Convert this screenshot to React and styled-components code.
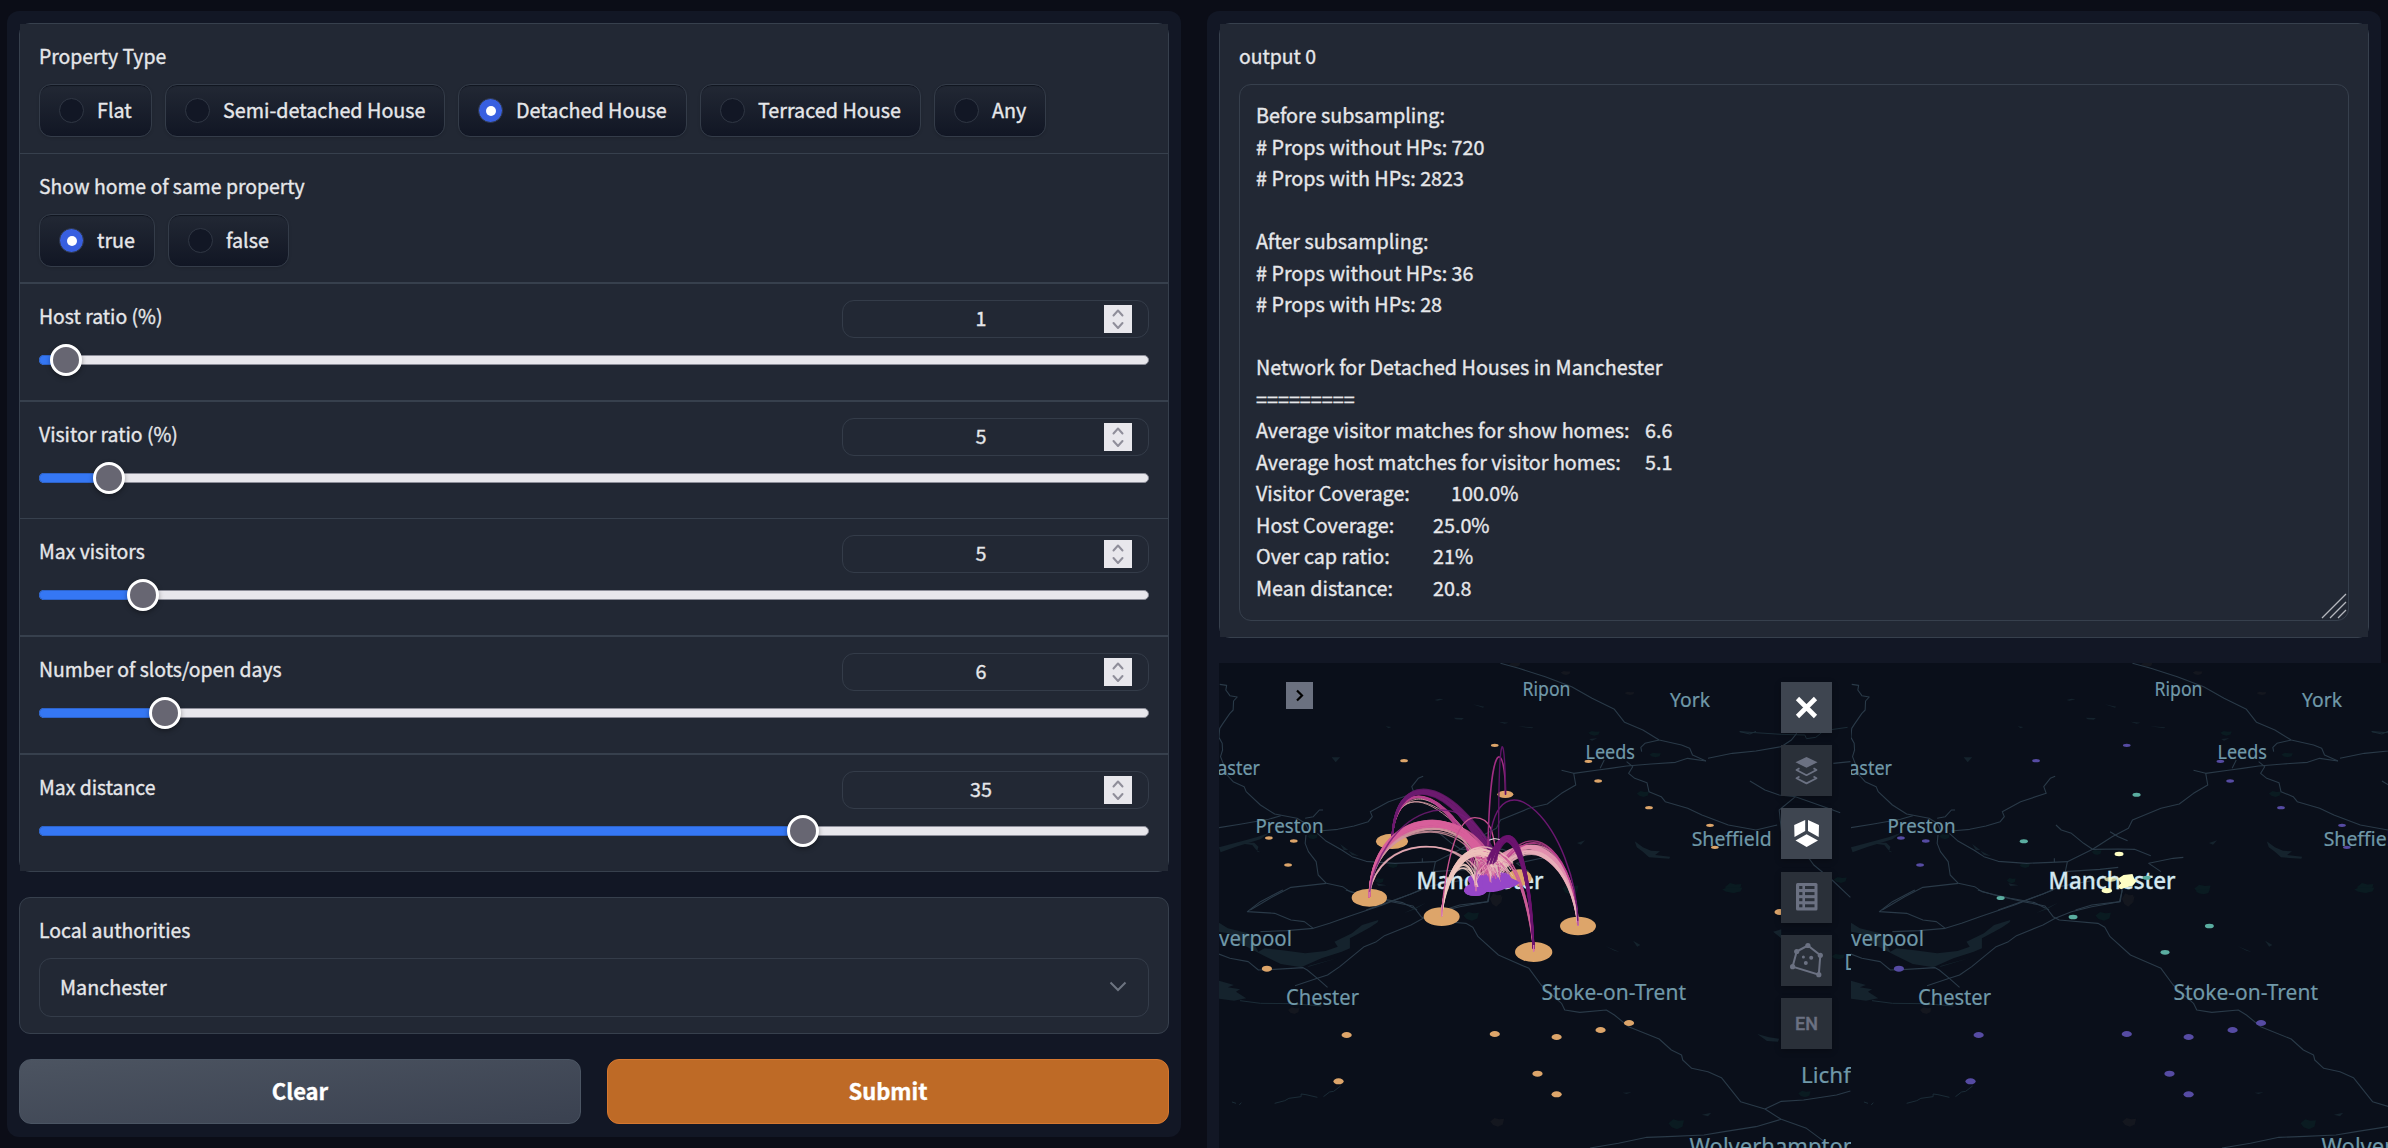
import React from "react";
import styled, { createGlobalStyle, css } from "styled-components";

const GlobalStyle = createGlobalStyle`
  *, *::before, *::after { box-sizing: border-box; }
  body {
    margin: 0;
    background: #0b0d17;
    color: #e6e7ea;
    font-family: "Noto Sans CJK SC", "Open Sans", sans-serif;
    font-size: 19.75px;
    -webkit-text-stroke: 0.35px currentColor;
    overflow: hidden;
  }
`;

const Page = styled.main`
  display: flex;
  align-items: flex-start;
  gap: 26px;
  width: 2388px;
  height: 1148px;
  padding: 11px 7px 0;
  overflow: hidden;
`;

const Panel = styled.section`
  display: flex;
  flex-direction: column;
  flex: 0 0 1174px;
  min-width: 0;
  width: 1174px;
  height: ${(p) => p.$height}px;
  padding: 12px;
  border-radius: 12px;
  background: #121725;
`;

const Group = styled.div`
  border: 1px solid #37404d;
  border-radius: 11px;
`;

const Row = styled.div`
  height: ${(p) => p.$height}px;
  padding: 17px 19px 0;
  background: #222834;
  border-bottom: ${(p) => p.$rule || 0}px solid #37404d;
`;

const Label = styled.div`
  font-size: 19.4px;
  line-height: 30px;
  white-space: nowrap;
`;

const Options = styled.div`
  display: flex;
  gap: 13px;
  margin-top: 13px;
`;

const Option = styled.label`
  display: flex;
  align-items: center;
  gap: 13px;
  width: ${(p) => p.$width}px;
  height: 53px;
  padding-left: 19px;
  border: 1px solid #343c49;
  border-radius: 12px;
  background: linear-gradient(#222834, #111624);
  box-shadow: inset 0 2px 1px -1px #10141f, 0 1px 3px rgba(0, 0, 0, 0.12);
  white-space: nowrap;
`;

const OptionText = styled.span`
  line-height: 26px;
  margin-bottom: 2px;
`;

const Dot = styled.span`
  display: flex;
  align-items: center;
  justify-content: center;
  width: 25px;
  height: 25px;
  border: 1px solid #303744;
  border-radius: 50%;
  background: ${(p) => (p.$on ? "#385fe0" : "#121725")};

  &::after {
    content: "";
    width: 10px;
    height: 10px;
    border-radius: 50%;
    background: ${(p) => (p.$on ? "#fff" : "transparent")};
  }
`;

const SliderHead = styled.div`
  display: flex;
  justify-content: space-between;
`;

const NumberBox = styled.div`
  display: flex;
  align-items: center;
  width: 307px;
  height: 38px;
  margin-top: -1px;
  padding: 0 16px 0 15px;
  border: 1px solid #343c49;
  border-radius: 12px;
`;

const NumberValue = styled.span`
  flex: 1;
  padding-bottom: 2px;
  line-height: 28px;
  text-align: center;
`;

const Stepper = styled.span`
  display: flex;
  width: 28px;
  height: 28px;
  background: #e8e7ec;
`;

const Track = styled.div`
  display: flex;
  align-items: center;
  height: 10px;
  margin-top: 17px;
  border: 1px solid #8d8e99;
  border-radius: 5px;
  background: #e8e7ec;
`;

const Fill = styled.div`
  flex: none;
  height: 10px;
  margin-left: -1px;
  border-radius: 5px 0 0 5px;
  background: #3577f4;
  box-shadow: inset 0 0 0 1px #2d63c9;
`;

const Thumb = styled.div`
  flex: none;
  width: 32px;
  height: 32px;
  margin-left: -16px;
  border: 3px solid #fff;
  border-radius: 50%;
  background: #676672;
  box-shadow: 0 2px 5px rgba(0, 0, 0, 0.35);
`;

const Card = styled.div`
  height: 137px;
  margin-top: 25px;
  padding: 17px 19px 0;
  border: 1px solid #37404d;
  border-radius: 11px;
  background: #222834;
`;

const Select = styled.div`
  display: flex;
  align-items: center;
  justify-content: space-between;
  height: 59px;
  margin-top: 13px;
  padding: 0 21px 3px 20px;
  border: 1px solid #343c49;
  border-radius: 12px;
`;

const Buttons = styled.div`
  display: flex;
  gap: 26px;
  margin-top: 25px;
`;

const Button = styled.button`
  flex: 1;
  height: 65px;
  padding: 0 0 3px;
  border: 1px solid ${(p) => (p.$primary ? "#d5772f" : "#4b5563")};
  border-radius: 12px;
  background: ${(p) => (p.$primary ? "#be6a26" : "linear-gradient(to bottom right, #4c5461, #3a4150)")};
  color: #fff;
  font: 700 22px "Noto Sans CJK SC", "Open Sans", sans-serif;
`;

const TextArea = styled.div`
  display: flex;
  justify-content: space-between;
  align-items: flex-end;
  height: 537px;
  margin-top: 13px;
  padding: 14px 1px 1px 16px;
  border: 1px solid #37404d;
  border-radius: 12px;
`;

const Lines = styled.div`
  align-self: flex-start;
`;

const Line = styled.div`
  display: grid;
  grid-template-columns: ${(p) => (p.$column ? `${p.$column}px auto` : "auto")};
  height: 31.5px;
  line-height: 31.5px;
  white-space: nowrap;
`;

const Maps = styled.div`
  display: flex;
  width: 1264px;
  margin-top: 25px;
`;

const MapPane = styled.div`
  position: relative;
  flex: 0 0 632px;
  height: 485px;
  overflow: hidden;
  background: #0a0f1a;
`;

const MapSvg = styled.svg`
  display: block;
  width: 632px;
  height: 485px;
  -webkit-text-stroke: 0;

  text { font-family: "Noto Sans", "Open Sans", sans-serif; }
  path { vector-effect: non-scaling-stroke; }
`;

const ExpandButton = styled.div`
  position: absolute;
  left: 67px;
  top: 19px;
  width: 27px;
  height: 27px;
  background: #6b7180;
`;

const Toolbar = styled.div`
  position: absolute;
  right: 19px;
  top: 19px;
  display: flex;
  flex-direction: column;
  gap: 12.2px;
`;

const Tool = styled.div`
  display: flex;
  align-items: center;
  justify-content: center;
  width: 51px;
  height: 51px;
  background: ${(p) => (p.$active ? "#3e4550" : "#2a3039")};
  color: #6b7182;
  font: 500 18px Roboto, "Open Sans", sans-serif;
  box-shadow: 0 2px 6px rgba(0, 0, 0, 0.25);
  ${(p) => p.$active && css`color: #fff;`}
`;

const PROPERTY_TYPES = [
  { text: "Flat", width: 113 },
  { text: "Semi-detached House", width: 280 },
  { text: "Detached House", width: 229, on: true },
  { text: "Terraced House", width: 221 },
  { text: "Any", width: 112 },
];

const SAME_PROPERTY = [
  { text: "true", width: 116, on: true },
  { text: "false", width: 121 },
];

const SLIDERS = [
  { label: "Host ratio (%)", value: 1, at: 26.5, height: 118, rule: 2 },
  { label: "Visitor ratio (%)", value: 5, at: 69.5, height: 117, rule: 1 },
  { label: "Max visitors", value: 5, at: 104, height: 118, rule: 2 },
  { label: "Number of slots/open days", value: 6, at: 126, height: 118, rule: 2 },
  { label: "Max distance", value: 35, at: 764, height: 116, rule: 0 },
];

const OUTPUT = [
  ["Before subsampling:"],
  ["# Props without HPs: 720"],
  ["# Props with HPs: 2823"],
  [""],
  ["After subsampling:"],
  ["# Props without HPs: 36"],
  ["# Props with HPs: 28"],
  [""],
  ["Network for Detached Houses in Manchester"],
  ["========="],
  ["Average visitor matches for show homes:", 389, "6.6"],
  ["Average host matches for visitor homes:", 389, "5.1"],
  ["Visitor Coverage:", 195, "100.0%"],
  ["Host Coverage:", 177, "25.0%"],
  ["Over cap ratio:", 177, "21%"],
  ["Mean distance:", 177, "20.8"],
];

function RadioRow({ label, options, height, rule }) {
  return (
    <Row $height={height} $rule={rule}>
      <Label>{label}</Label>
      <Options>
        {options.map((o) => (
          <Option key={o.text} $width={o.width}>
            <Dot $on={o.on} />
            <OptionText>{o.text}</OptionText>
          </Option>
        ))}
      </Options>
    </Row>
  );
}

function SliderRow({ label, value, at, height, rule }) {
  return (
    <Row $height={height} $rule={rule}>
      <SliderHead>
        <Label>{label}</Label>
        <NumberBox>
          <NumberValue>{value}</NumberValue>
          <Stepper>
            <svg width="28" height="28" fill="none" stroke="#8f8e9a" strokeWidth="2" strokeLinecap="round" strokeLinejoin="round">
              <path d="M9.5 10.5 14 5.5l4.500 5M9.500 18 14 23l4.500-5" />
            </svg>
          </Stepper>
        </NumberBox>
      </SliderHead>
      <Track>
        <Fill style={{ width: at }} />
        <Thumb />
      </Track>
    </Row>
  );
}

/* Map geometry is kept in two tiles, each with its own scale. */
const NORTH = "translate(-101 -13) scale(.40689 .33333)";
const SOUTH = "translate(-101 227) scale(.40689 .33333)";

const NORTH_ROADS = [
  "M250,103 267,106 265,120 275,137 293,141 284,153 283,180 275,190 258,220 250,235 248,262 256,280 257,300 252,320 260,345 268,375 283,395 310,410 315,425 350,465 385,492 440,505 460,520 470,545",
  "M495,543 540,538 580,528 615,515 625,500 620,485 665,455 728,430 722,410 738,385 750,379",
  "M462,555 460,580 468,605 487,635 492,675 512,700 552,710 570,725 640,745 700,758 735,780",
  "M490,550 510,572 550,600 575,620 610,634 680,640 740,637 780,635 842,598 890,560 930,535 940,510 1010,475 1055,462 1090,430 1125,405 1120,370 1090,361",
  "M1120,370 1180,360 1210,355 1250,348 1310,342 1370,337 1400,325 1445,333",
  "M1450,325 1510,310 1568,303 1630,290 1655,270 1668,250",
  "M940,40 985,55 1050,80 1115,110 1165,145 1220,178 1245,217 1290,240 1330,270 1385,285 1405,295 1412,315 1445,333",
  "M1330,270 1295,280 1285,292 1287,305",
  "M1195,330 1185,355M1250,335 1265,350 1255,370 1270,385 1300,398 1305,425 1335,440 1345,455 1400,475 1435,495 1500,525 1568,540 1620,525",
  "M752,525 765,540 790,550 820,580 842,598 905,597 945,598 985,617",
  "M885,545 905,560 928,572M1065,622 1040,625 980,640 1010,665M748,625 748,637",
  "M780,635 775,665 860,658 905,652M512,700 425,712 380,740 325,780",
  "M610,780 672,753 720,732 760,710 850,690M915,715 910,755 840,765 800,780",
  "M248,533 300,523 370,508 400,497M460,505 480,500 495,480 504,480",
  "M1553,393 1590,420 1625,435 1665,440 1745,475 1775,488M1665,440 1625,480 1632,560 1700,628 1710,645 1755,690 1800,742",
  "M1758,340 1800,335",
];

const SOUTH_ROADS = [
  "M405,0 350,35 318,65 385,70 425,90 458,95 480,115 415,122 350,125",
  "M480,115 520,100 570,78 650,45 745,0",
  "M560,0 600,15 672,35 725,48 745,80 760,90 855,100 872,112 885,140 935,195 1010,235 1040,285 1090,340 1098,360 1135,367 1200,360 1220,375 1255,410 1330,447 1360,480 1385,495 1388,510 1410,535 1450,545 1483,563 1530,635 1590,657 1630,688 1692,715 1736,755",
  "M915,0 908,35 840,50 790,65 750,85 720,105 655,137 635,155 605,170 545,230 515,255 490,265 435,287",
  "M248,192 275,205 320,215 345,240 385,238 455,233 465,240 490,265 515,292",
  "M1160,774 1230,760 1300,742 1350,740 1440,735 1490,725 1568,710 1630,688",
  "M1590,657 1630,634 1685,630 1766,615 1800,603",
];

const NORTH_WATER = [
  "M248,592 290,578 340,562 372,548 350,568 290,590 252,607z",
  "M290,578 335,578 345,590 342,605 350,607 340,600 330,585z",
  "M778,150 790,146 800,148 785,152zM872,163 900,170 897,173z",
  "M825,203 850,204 845,209 830,208zM935,215 960,218 950,221zM983,229 1020,232 1018,235z",
  "M658,229 672,231 665,235zM525,322 546,322 535,337zM1158,267 1178,265 1165,272z",
  "M1128,579 1148,571 1138,584zM1270,574 1290,592 1310,602 1332,604 1320,615 1357,620 1355,626 1305,622 1290,605 1275,592z",
  "M546,582 566,600 555,600zM566,602 592,618 575,615zM635,700 660,706 640,708z",
  "M235,228 248,220 246,245z",
];

const SOUTH_WATER = [
  "M248,98 270,115 320,130 345,185 360,175 400,180 460,190 510,183 540,170 532,155 575,130 600,105 640,90 638,97 620,112 600,125 570,145 570,175 550,185 500,205 450,232 400,222 355,195 300,160 270,130 248,125z",
  "M540,204 465,232 470,227z",
  "M248,272 285,285 270,292 300,298 290,305 315,325 285,332 248,326z",
  "M1198,168 1233,186 1220,182zM1266,152 1284,165 1276,170zM1240,608 1262,607 1250,612zM1435,674 1458,668 1450,679z",
  "M1571,432 1600,442 1625,446 1622,455 1595,453z",
  "M703,69 757,38 730,58zM1610,125 1630,118 1630,145z",
];

const STREAMS = [
  "M1528,245 1630,253 1688,255 1692,266 1715,262 1735,242 1793,232",
  "M1528,245 1553,252 1568,244",
];

const SOUTH_STREAMS = [
  "M300,332 350,340 430,341 500,348",
  "M280,636 290,640M298,645 303,638M385,640 410,632 420,625 450,620 450,612 462,614 490,622M505,620 520,606 530,604 547,588",
];

const NORTH_PARKS = [
  [1170, 250, 14, 7], [1320, 315, 14, 7], [1290, 432, 15, 9], [1112, 718, 20, 14], [1512, 714, 20, 15],
  [675, 647, 13, 7], [642, 692, 11, 8], [478, 560, 13, 8], [852, 607, 12, 8], [1775, 690, 16, 9],
];
const SOUTH_PARKS = [
  [868, 79, 19, 13], [1372, 703, 19, 15], [1113, 5, 17, 8], [1687, 612, 15, 10], [1770, 200, 16, 8], [1510, 0, 25, 9],
];
const NORTH_TOWNS = [[1100, 69, 12, 6], [1257, 130, 12, 5], [975, 44, 14, 7], [930, 750, 15, 14]];
const SOUTH_TOWNS = [[432, 362, 14, 10], [932, 697, 17, 13], [928, 30, 14, 20]];

const blob = ([x, y, a, b]) =>
  `M${x - a},${y - b * 0.2} ${x - a * 0.4},${y - b} ${x + a * 0.3},${y - b * 0.7} ${x + a},${y - b * 0.8} ${x + a * 0.8},${y + b * 0.5} ${x + a * 0.1},${y + b} ${x - a * 0.6},${y + b * 0.6}z`;

const LABELS = [
  ["Ripon", 303.5, 33, 48, 19.6],
  ["York", 451, 43.700, 40, 19.600],
  ["Leeds", 366.5, 96, 49.5, 20],
  ["Lancaster", -41, 111.7, 82, 20],
  ["Preston", 36.5, 169.7, 68, 20.5],
  ["Sheffield", 472.7, 182.7, 80, 20.5],
  ["Liverpool", -16, 282.7, 89, 22],
  ["Chester", 67, 342, 73, 22],
  ["Stoke-on-Trent", 322.5, 337, 144.5, 22],
  ["Derby", 625.5, 307, 54, 22],
  ["Lichfield", 582, 420, 88, 22],
  ["Wolverhampton", 470.5, 492, 167, 23],
];

const NORTH_SITES = [
  [703, 332], [926, 286], [1156, 334], [1180, 393], [1305, 473], [1455, 526], [1467, 592], [371, 564], [432, 573], [418, 645],
];
const SOUTH_SITES = [
  [366, 236], [562, 435], [926, 432], [1078, 441], [1186, 420], [1256, 399], [1031, 551], [1078, 613], [542, 574], [1626, 66],
];

const HOSTS = [
  [118, 503, 53, 27], [186, 334, 48, 23], [335, 560, 54, 28], [611, 666, 56, 30],
  [744, 588, 54, 28], [526, 193, 24, 11], [568, 443, 37, 25],
];

/* Each bundle fans a cubic from a host towards the city; spread is per control point. */
const BUNDLES = [
  { n: 5, c: [187, 330, 190, 155, 330, 165, 470, 410], s: [0, 0, 6, 22, 14, 24, 24, 14], color: "#e0a6ac", w: 1 },
  { n: 8, c: [187, 330, 190, 145, 345, 140, 440, 410], s: [0, 0, 4, 14, 20, 16, 20, 10], color: "#b8408f", w: 1.3 },
  { n: 18, c: [187, 330, 190, 128, 350, 128, 495, 400], s: [0, 0, 4, 12, 26, 22, 24, 20], color: "#6d1b70", w: 1.7 },
  { n: 10, c: [118, 500, 130, 245, 420, 240, 470, 430], s: [0, 0, 8, 28, 20, 26, 40, 14], color: "#d295a0", w: 1.2 },
  { n: 22, c: [118, 500, 125, 228, 430, 212, 480, 430], s: [0, 0, 8, 22, 20, 30, 40, 22], color: "#d9609c", w: 1.5 },
  { n: 2, c: [118, 490, 150, 312, 390, 320, 450, 430], s: [0, 0, 2, 6, 8, 8, 20, 8], color: "#efb0ba", w: 1.5 },
  { n: 1, c: [118, 490, 150, 260, 400, 110, 500, 400], s: [0, 0, 0, 0, 0, 0, 0, 0], color: "#741c78", w: 1.5 },
  { n: 20, c: [744, 585, 730, 400, 610, 270, 480, 420], s: [0, 0, 14, 30, 36, 26, 34, 20], color: "#e391b0", w: 1.6 },
  { n: 3, c: [744, 585, 738, 400, 620, 235, 500, 420], s: [0, 0, 4, 12, 14, 14, 14, 10], color: "#bd3f8f", w: 1.2 },
  { n: 7, c: [744, 585, 728, 420, 610, 290, 510, 420], s: [0, 0, 8, 12, 22, 18, 14, 12], color: "#eab0bb", w: 1.3 },
  { n: 6, c: [611, 660, 595, 470, 530, 320, 480, 390], s: [0, 0, 8, 22, 14, 30, 14, 14], color: "#cf5f9a", w: 1.2 },
  { n: 18, c: [335, 555, 345, 400, 440, 300, 520, 415], s: [0, 0, 8, 22, 30, 32, 50, 24], color: "#efc3bd", w: 1.3 },
  { n: 5, c: [335, 555, 350, 420, 410, 350, 440, 475], s: [0, 0, 8, 20, 14, 20, 6, 6], color: "#f1cbc2", w: 1.3 },
];

const DARK_BUNDLE = { n: 20, c: [611, 655, 598, 410, 545, 220, 485, 390], s: [0, 0, 8, 28, 14, 24, 20, 18], color: "#6d1470", w: 1.6 };

const SINGLE_ARCS = [
  ["M335,555 C345,420 375,262 435,263 S490,330 510,440", "#c95391", 1.4],
  ["M744,585 C740,290 500,50 478,345", "#6a176f", 1.5],
  ["M526,193 C528,50 482,-10 474,345", "#a12e83", 1.5],
  ["M527,193 C525,0 505,-40 506,345", "#5e1466", 1.4],
];

/* Repeatable offset in -1..1 so that the fans look the same on every load. */
const jitter = (k) => {
  const v = Math.sin(k * 127.1 + 3.7) * 43758.5;
  return (v - Math.floor(v)) * 2 - 1;
};

const bundlePath = (b, i) => {
  const p = b.c.map((v, k) => (v + b.s[k] * jitter(i * 9 + k + b.n) * 0.7).toFixed(1));
  return `M${p[0]},${p[1]} C${p[2]},${p[3]} ${p[4]},${p[5]} ${p[6]},${p[7]}`;
};

const range = (n) => Array.from({ length: n }, (_, i) => i);

function Bundle({ bundle }) {
  return range(bundle.n).map((i) => (
    <path key={i} d={bundlePath(bundle, i)} stroke={bundle.color} strokeWidth={bundle.w} opacity=".82" />
  ));
}

function Basemap() {
  const tile = (transform, roads, water, streams, parks, towns) => (
    <g transform={transform}>
      <g fill="#0a1b21">{parks.map((b) => <path key={b} d={blob(b)} />)}</g>
      <g fill="#14171f">{towns.map((b) => <path key={b} d={blob(b)} />)}</g>
      <g fill="#15232d">{water.map((d) => <path key={d} d={d} />)}</g>
      <g fill="none" stroke="#1b2c37" strokeWidth="1">{streams.map((d) => <path key={d} d={d} />)}</g>
      <g fill="none" stroke="#2a3a48" strokeWidth="1.1" strokeLinejoin="round">{roads.map((d) => <path key={d} d={d} />)}</g>
    </g>
  );
  return (
    <>
      {tile(NORTH, NORTH_ROADS, NORTH_WATER, STREAMS, NORTH_PARKS, NORTH_TOWNS)}
      {tile(SOUTH, SOUTH_ROADS, SOUTH_WATER, SOUTH_STREAMS, SOUTH_PARKS, SOUTH_TOWNS)}
      <g fill="#7099a9" stroke="#7099a9" strokeWidth=".2">
        {LABELS.map(([text, x, y, w, size]) => (
          <text key={text} x={x} y={y} fontSize={size} textLength={w} lengthAdjust="spacingAndGlyphs">{text}</text>
        ))}
      </g>
      <text x="197.500" y="225.700" fontSize="24" fontWeight="500" fill="#d3e8f1" stroke="#d3e8f1" strokeWidth=".3" textLength="127" lengthAdjust="spacingAndGlyphs">Manchester</text>
    </>
  );
}

function Sites({ color }) {
  return (
    <g fill={color}>
      <g transform={NORTH}>{NORTH_SITES.map(([x, y]) => <ellipse key={x} cx={x} cy={y} rx="9.5" ry="5" />)}</g>
      <g transform={SOUTH}>{SOUTH_SITES.map(([x, y]) => <ellipse key={`${x}-${y}`} cx={x} cy={y} rx="12.5" ry="9" />)}</g>
    </g>
  );
}

function ArcMap() {
  return (
    <MapSvg viewBox="0 0 632 485">
      <Basemap />
      <Sites color="#dda56a" />
      <g transform="translate(111 67) scale(.33333)">
        <g fill="#dda56a">{HOSTS.map(([x, y, a, b]) => <ellipse key={x} cx={x} cy={y} rx={a} ry={b} />)}</g>
        <g fill="#9646c8">
          <path d="M402,482 Q402,470 420,462 Q405,445 425,435 L500,425 Q545,425 540,445 L572,455 Q560,472 525,476 Q500,488 470,486 Q455,498 435,498 Q405,496 402,482z" />
        </g>
        <g fill="none" strokeLinecap="round">
          {BUNDLES.map((b, j) => <Bundle key={j} bundle={b} />)}
          {SINGLE_ARCS.map(([d, color, w]) => <path key={d} d={d} stroke={color} strokeWidth={w} />)}
          {range(26).map((i) => {
            const x = 430 + (i * 37) % 90;
            const end = [437, 483, 510][i % 3];
            const y = 375 + jitter(i) * 14;
            return (
              <path
                key={i}
                d={`M${end},${end === 437 ? 480 : end === 483 ? 468 : 458} C${end - 8},${y + 30} ${x},${y - 10} ${x + 34},${y + 50}`}
                stroke={["#efc3c0", "#d970a6", "#c24f96", "#d9b7b8"][i % 4]}
                strokeWidth=".9"
                opacity=".85"
              />
            );
          })}
          <Bundle bundle={DARK_BUNDLE} />
          <path d="M478,330 Q492,322 508,328" stroke="#e9dfe2" strokeWidth="1" />
        </g>
        <g fill="#9646c8">
          <ellipse cx="436" cy="484" rx="33" ry="14" />
          <path d="M455,440 470,432 478,455 495,462 505,440 512,455 535,432 545,445 570,458 545,470 500,482 460,480z" />
        </g>
        <g stroke="#d778a9" strokeWidth="1.4">
          <path d="M118,485V502M335,540V560M611,645V666M744,572V588M438,465V484" />
        </g>
      </g>
    </MapSvg>
  );
}

function ClusterMap() {
  return (
    <MapSvg viewBox="0 0 632 485">
      <Basemap />
      <Sites color="#564ba3" />
      <g fill="#5aada0">
        <g transform={NORTH}>
          {[[950, 434], [673, 574], [616, 744], [975, 683]].map(([x, y]) => <ellipse key={x} cx={x} cy={y} rx="10" ry="6" />)}
        </g>
        <g transform={SOUTH}>
          {[[794, 81], [1129, 108], [1020, 187]].map(([x, y]) => <ellipse key={x} cx={x} cy={y} rx="11" ry="7" />)}
        </g>
      </g>
      <g transform={NORTH} fill="#ffffc4">
        <ellipse cx="907" cy="612" rx="11" ry="6.500" />
        <ellipse cx="886" cy="688" rx="15" ry="7" opacity=".75" />
        <ellipse cx="877" cy="722" rx="13" ry="8" />
        <path d="M904,686 918,675 940,672 944,685 950,694 940,708 925,712 912,718 903,710 912,700z" />
      </g>
    </MapSvg>
  );
}

function LayersIcon() {
  return (
    <svg width="51" height="51" fill="none" stroke="currentColor" strokeWidth="1.800" strokeLinejoin="round">
      <path d="M25.500 12 36.500 17.200 25.500 22.800 14.500 17.200z" fill="currentColor" stroke="none" />
      <path d="M18.500 23.200 15.500 25l10 5.200 10-5.200-3-1.800M18.500 31.500 15.500 33.200l10 5.200 10-5.200-3-1.700" />
    </svg>
  );
}

function CubeIcon() {
  return (
    <svg width="51" height="51" fill="currentColor">
      <path d="M13.200 17 24.200 12v11L13.500 29zM27 12l11 5-.300 12L27 23zM25.600 26.300 37 32.500 25.600 39 14.500 32.500z" />
    </svg>
  );
}

function LegendIcon() {
  return (
    <svg width="51" height="51">
      <rect x="15" y="11" width="21.500" height="27.500" rx="1.500" fill="currentColor" />
      <g fill="#2a3039">
        {[14, 20.1, 26.2, 32.3].map((y) => (
          <React.Fragment key={y}>
            <rect x="18.200" y={y} width="3.200" height="3" />
            <rect x="24" y={y} width="9.500" height="3" />
          </React.Fragment>
        ))}
      </g>
    </svg>
  );
}

function PolygonIcon() {
  const corners = [[26.9, 10.5], [39.3, 20.3], [37.8, 39.7], [11.6, 31.7], [15.7, 16.5]];
  return (
    <svg width="51" height="51" fill="currentColor">
      <path d={`M${corners.join(" ")}z`} fill="none" stroke="currentColor" strokeWidth="2" />
      {corners.map(([x, y]) => <circle key={x} cx={x} cy={y} r="2.600" />)}
      <circle cx="22.400" cy="22" r="1.500" />
      <circle cx="30.200" cy="22.700" r="2" />
      <circle cx="24.800" cy="28" r="2" />
    </svg>
  );
}

export default function App() {
  return (
    <>
      <GlobalStyle />
      <Page>
        <Panel $height={1126}>
          <Group>
            <RadioRow label="Property Type" options={PROPERTY_TYPES} height={130} rule={1} />
            <RadioRow label="Show home of same property" options={SAME_PROPERTY} height={130} rule={2} />
            {SLIDERS.map((s) => <SliderRow key={s.label} {...s} />)}
          </Group>
          <Card>
            <Label>Local authorities</Label>
            <Select>
              <span>Manchester</span>
              <svg width="18" height="12" fill="none" stroke="#6d7480" strokeWidth="2">
                <path d="M1.500 2.500 9 10 16.500 2.500" />
              </svg>
            </Select>
          </Card>
          <Buttons>
            <Button>Clear</Button>
            <Button $primary>Submit</Button>
          </Buttons>
        </Panel>
        <Panel $height={1150}>
          <Group>
            <Row $height={613}>
              <Label>output 0</Label>
              <TextArea>
                <Lines>
                  {OUTPUT.map(([text, column, value], i) => (
                    <Line key={i} $column={column}>
                      <span>{text}</span>
                      {value && <span>{value}</span>}
                    </Line>
                  ))}
                </Lines>
                <svg width="26" height="26" fill="none" stroke="#b4b7bd" strokeWidth="1.300">
                  <path d="M1 25 25 1M9 25 25 9M17 25l8-8" />
                </svg>
              </TextArea>
            </Row>
          </Group>
          <Maps>
            <MapPane>
              <ArcMap />
              <ExpandButton>
                <svg width="27" height="27" fill="none" stroke="#000" strokeWidth="2.200">
                  <path d="M11 8.500 16 13.500l-5 5" />
                </svg>
              </ExpandButton>
              <Toolbar>
                <Tool $active>
                  <svg width="51" height="51" stroke="currentColor" strokeWidth="4.600">
                    <path d="M16.500 16.500 34.500 34.500M34.500 16.500 16.500 34.500" />
                  </svg>
                </Tool>
                <Tool><LayersIcon /></Tool>
                <Tool $active><CubeIcon /></Tool>
                <Tool><LegendIcon /></Tool>
                <Tool><PolygonIcon /></Tool>
                <Tool>EN</Tool>
              </Toolbar>
            </MapPane>
            <MapPane>
              <ClusterMap />
            </MapPane>
          </Maps>
        </Panel>
      </Page>
    </>
  );
}
